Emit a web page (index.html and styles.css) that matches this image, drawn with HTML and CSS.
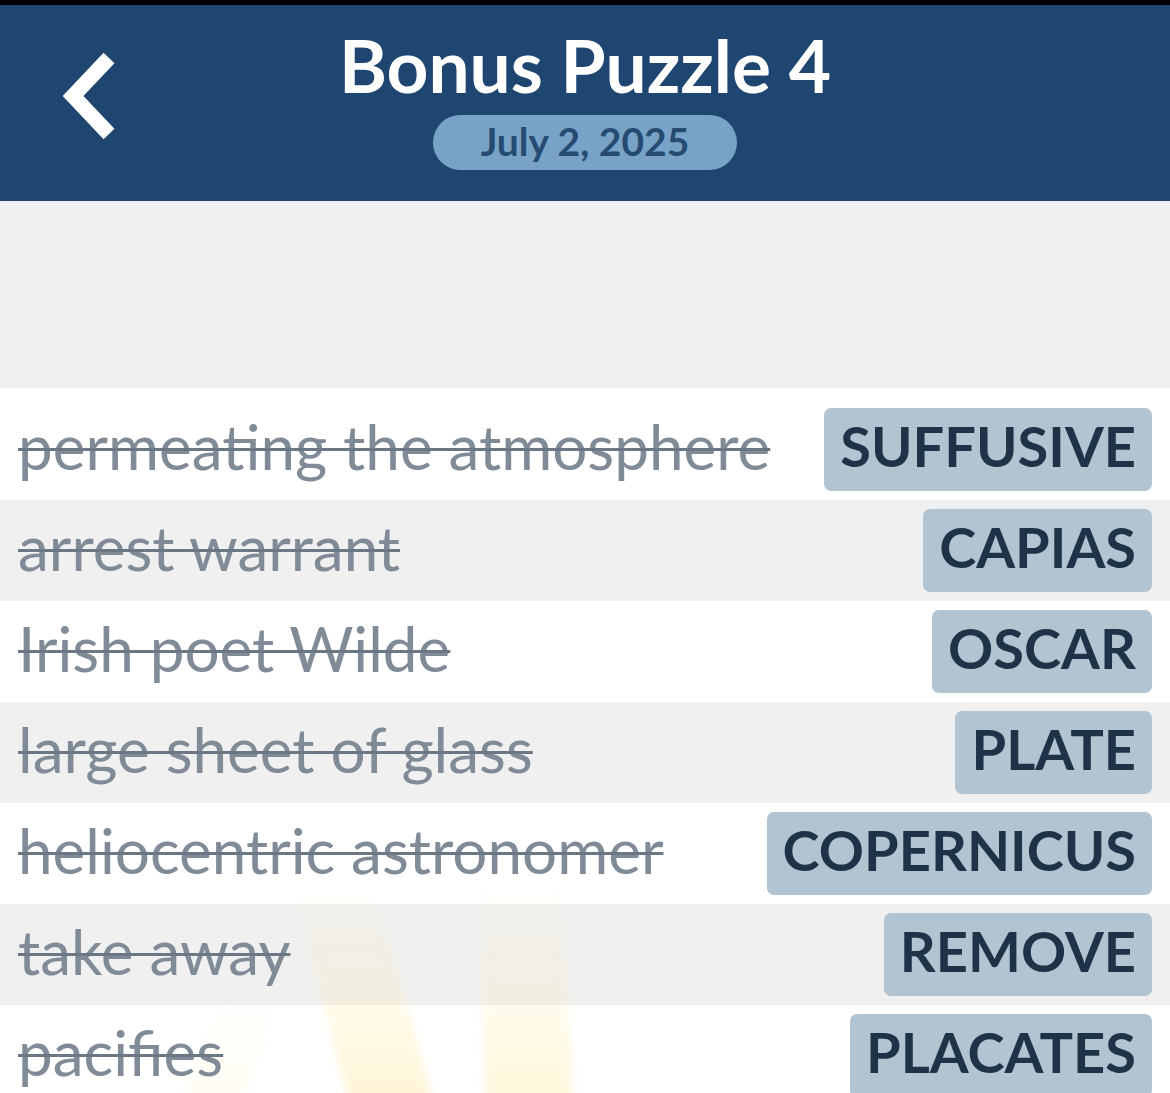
FILE: index.html
```html
<!DOCTYPE html>
<html lang="en">
<head>
  <meta charset="UTF-8" />
  <meta name="viewport" content="width=device-width, initial-scale=1.0"/>
  <title>Bonus Puzzle 4</title>
  <link rel="stylesheet" href="styles.css">
</head>
<body>
  <div class="status-bar"></div>

  <header class="header">
    <button class="back" aria-label="Back">
      <svg width="60" height="100" viewBox="0 0 60 100">
        <polyline points="48,8 12,46 48,84" fill="none" stroke="#fff" stroke-width="15" />
      </svg>
    </button>
    <div class="title-block">
      <h1>Bonus Puzzle 4</h1>
      <div class="date">July 2, 2025</div>
    </div>
    <div></div>
  </header>

  <div class="puzzle-area"></div>

  <div class="clues">
    <!-- faint light rays behind the bottom rows -->
    <div class="ray ray-1"></div>
    <div class="ray ray-2"></div>
    <div class="ray ray-3"></div>

    <div class="rows">
      <div class="row">
        <span class="clue">permeating the atmosphere</span>
        <span class="answer">SUFFUSIVE</span>
      </div>
      <div class="row">
        <span class="clue">arrest warrant</span>
        <span class="answer">CAPIAS</span>
      </div>
      <div class="row">
        <span class="clue">Irish poet Wilde</span>
        <span class="answer">OSCAR</span>
      </div>
      <div class="row">
        <span class="clue">large sheet of glass</span>
        <span class="answer">PLATE</span>
      </div>
      <div class="row">
        <span class="clue">heliocentric astronomer</span>
        <span class="answer">COPERNICUS</span>
      </div>
      <div class="row">
        <span class="clue">take away</span>
        <span class="answer">REMOVE</span>
      </div>
      <div class="row">
        <span class="clue">pacifies</span>
        <span class="answer">PLACATES</span>
      </div>
    </div>
  </div>
</body>
</html>
```

FILE: styles.css
```css
body {
  margin: 0;
  font-family: Lato, "Open Sans", sans-serif;
  background: #fff;
  overflow: hidden;
}

.status-bar {
  height: 5px;
  background: #000;
}

.header {
  height: 196px;
  background: #1f4670;
  display: grid;
  grid-template-columns: 1fr auto 1fr;
  align-items: start;
}

.back {
  background: none;
  border: none;
  padding: 0;
  margin: 45px 0 0 61px;
  width: 60px;
  height: 100px;
  cursor: pointer;
}

.back svg {
  display: block;
}

.title-block {
  display: flex;
  flex-direction: column;
  align-items: center;
}

h1 {
  margin: 24px 0 0;
  color: #fff;
  font-size: 73px;
  font-weight: 700;
  line-height: 73px;
}

.date {
  margin-top: 13px;
  width: 304px;
  height: 55px;
  border-radius: 28px;
  background: #78a3c7;
  color: #264b72;
  font-size: 39px;
  font-weight: 700;
  line-height: 53px;
  text-align: center;
}

.puzzle-area {
  height: 187px;
  background: #f0f0f0;
}

.clues {
  position: relative;
  padding-top: 11px;
}

.row {
  height: 101px;
  display: flex;
  align-items: center;
  justify-content: space-between;
  padding: 0 18px;
}

.row:nth-child(even) {
  background: #f0f0f0;
}

.ray {
  position: absolute;
  z-index: 1;
  pointer-events: none;
  filter: blur(5px);
}

.ray-1 {
  top: 492px;
  left: 322px;
  width: 84px;
  height: 240px;
  background: linear-gradient(rgba(255, 236, 170, 0), rgba(255, 226, 130, 0.16) 50%, rgba(255, 220, 110, 0.3));
  transform: skewX(15deg);
}

.ray-2 {
  top: 487px;
  left: 482px;
  width: 86px;
  height: 240px;
  background: linear-gradient(rgba(255, 236, 170, 0), rgba(255, 228, 140, 0.14) 50%, rgba(255, 220, 110, 0.28));
  transform: skewX(2deg);
}

.ray-3 {
  top: 600px;
  left: 200px;
  width: 60px;
  height: 130px;
  background: linear-gradient(rgba(255, 236, 170, 0), rgba(255, 230, 150, 0.14));
  transform: skewX(-20deg);
}

.clue {
  position: relative;
  z-index: 2;
  padding-bottom: 7px;
  color: #808b97;
  font-size: 62px;
  text-decoration: line-through;
  text-decoration-color: #6b7784;
  text-decoration-thickness: 3px;
  white-space: nowrap;
}

.answer {
  position: relative;
  z-index: 2;
  line-height: 75px;
  padding: 0 16px 8px;
  background: #b2c4d2;
  border-radius: 7px;
  color: #1e3347;
  font-size: 56px;
  font-weight: 700;
}
```
